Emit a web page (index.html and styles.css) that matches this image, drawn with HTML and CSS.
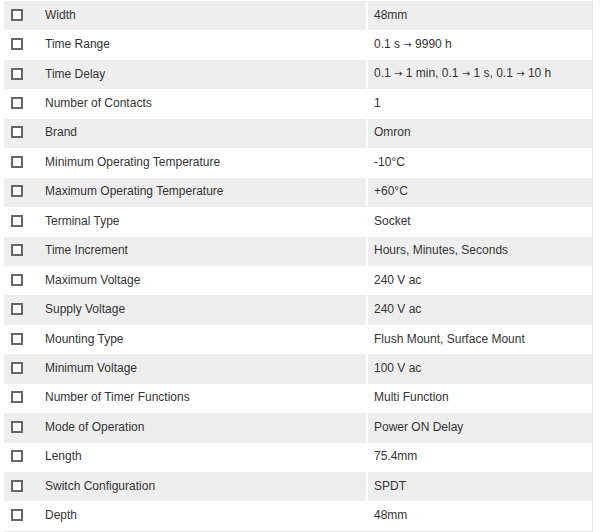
FILE: index.html
```html
<!DOCTYPE html>
<html>
<head>
<meta charset="utf-8">
<link rel="stylesheet" href="styles.css">
</head>
<body>
<div class="specs">
  <div class="row"><div class="chk"><span class="box"></span></div><div class="name">Width</div><div class="val">48mm</div></div>
  <div class="row"><div class="chk"><span class="box"></span></div><div class="name">Time Range</div><div class="val">0.1 s <span class="arr">→</span> 9990 h</div></div>
  <div class="row"><div class="chk"><span class="box"></span></div><div class="name">Time Delay</div><div class="val">0.1 <span class="arr">→</span> 1 min, 0.1 <span class="arr">→</span> 1 s, 0.1 <span class="arr">→</span> 10 h</div></div>
  <div class="row"><div class="chk"><span class="box"></span></div><div class="name">Number of Contacts</div><div class="val">1</div></div>
  <div class="row"><div class="chk"><span class="box"></span></div><div class="name">Brand</div><div class="val">Omron</div></div>
  <div class="row"><div class="chk"><span class="box"></span></div><div class="name">Minimum Operating Temperature</div><div class="val">-10°C</div></div>
  <div class="row"><div class="chk"><span class="box"></span></div><div class="name">Maximum Operating Temperature</div><div class="val">+60°C</div></div>
  <div class="row"><div class="chk"><span class="box"></span></div><div class="name">Terminal Type</div><div class="val">Socket</div></div>
  <div class="row"><div class="chk"><span class="box"></span></div><div class="name">Time Increment</div><div class="val">Hours, Minutes, Seconds</div></div>
  <div class="row"><div class="chk"><span class="box"></span></div><div class="name">Maximum Voltage</div><div class="val">240 V ac</div></div>
  <div class="row"><div class="chk"><span class="box"></span></div><div class="name">Supply Voltage</div><div class="val">240 V ac</div></div>
  <div class="row"><div class="chk"><span class="box"></span></div><div class="name">Mounting Type</div><div class="val">Flush Mount, Surface Mount</div></div>
  <div class="row"><div class="chk"><span class="box"></span></div><div class="name">Minimum Voltage</div><div class="val">100 V ac</div></div>
  <div class="row"><div class="chk"><span class="box"></span></div><div class="name">Number of Timer Functions</div><div class="val">Multi Function</div></div>
  <div class="row"><div class="chk"><span class="box"></span></div><div class="name">Mode of Operation</div><div class="val">Power ON Delay</div></div>
  <div class="row"><div class="chk"><span class="box"></span></div><div class="name">Length</div><div class="val">75.4mm</div></div>
  <div class="row"><div class="chk"><span class="box"></span></div><div class="name">Switch Configuration</div><div class="val">SPDT</div></div>
  <div class="row"><div class="chk"><span class="box"></span></div><div class="name">Depth</div><div class="val">48mm</div></div>
</div>
</body>
</html>
```

FILE: styles.css
```css
html, body {
  margin: 0;
  padding: 0;
  background: #fff;
}
.specs {
  margin: 1px 0 0 4px;
  width: 588px;
  border-right: 1px solid #e6e6e6;
  border-bottom: 1px solid #e6e6e6;
  font-family: "Liberation Sans", Arial, sans-serif;
  font-size: 12px;
  color: #333;
  display: grid;
  grid-auto-rows: 29.44px;
}
.row {
  display: grid;
  grid-template-columns: 41px 323px 224px;
  align-items: center;
  line-height: 14px;
}
.row:nth-child(odd) {
  background: #eeeeee;
}
.chk {
  display: flex;
  align-items: center;
  padding-left: 7px;
  padding-bottom: 2px;
}
.box {
  display: block;
  width: 12px;
  height: 12px;
  box-sizing: border-box;
  border: 2px solid #666;
  background: #fff;
}
.name {
  height: 100%;
  box-sizing: border-box;
  padding-bottom: 2px;
  display: flex;
  align-items: center;
  border-right: 2px solid #fff;
}
.val {
  padding-left: 6px;
  padding-bottom: 2px;
}
.arr {
  font-family: "DejaVu Sans", sans-serif;
  font-size: 10px;
}
```
